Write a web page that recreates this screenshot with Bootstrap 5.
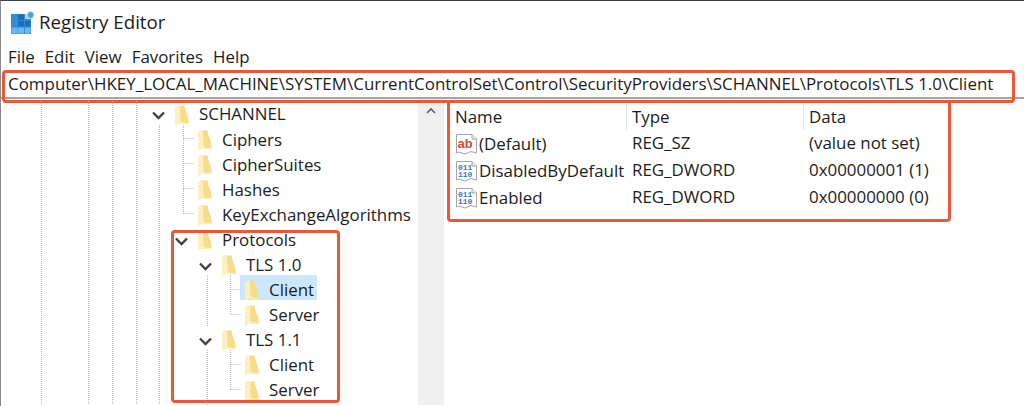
<!DOCTYPE html>
<html lang="en">
<head>
    <meta charset="UTF-8">
    <meta name="viewport" content="width=device-width, initial-scale=1.0">
    <title>Registry Editor</title>
    <link rel="stylesheet" href="https://cdn.jsdelivr.net/npm/bootstrap@5.3.0/dist/css/bootstrap.min.css">
    <style>
        html, body { height: 406px; overflow: hidden; }
        body { font-family: "Open Sans", "Noto Sans", sans-serif; font-size: 16.9px; color: #1c1c1c; background: #fff; line-height: 1.2; }
        .reg-window { width: 1024px; height: 406px; border-top: 1px solid #3d4248; border-left: 1px solid #8a8a8a; }
        .reg-title { height: 43px; padding-left: 10px; gap: 4px; font-size: 18.7px; }
        .reg-menu { height: 26px; padding-left: 7px; gap: 10px; }
        .reg-addr { height: 29px; padding-left: 7px; padding-top: 2px; border-bottom: 2px solid #a5a5a5; white-space: nowrap; font-size: 16.95px; }
        .mark-box { position: absolute; border: 3px solid #e8593a; border-radius: 4px; pointer-events: none; }
        .mark-addr { left: 1px; top: 69px; width: 1013px; height: 33px; }
        .mark-tree { left: 170px; top: 229px; width: 169px; height: 173px; }
        .reg-panes { height: 306px; overflow: hidden; }
        .tree-pane { width: 417px; padding-top: 3px; }
        .tree-row { height: 25.1px; white-space: nowrap; }
        .lv-0 { padding-left: 150px; }
        .lv-1 { padding-left: 173px; }
        .lv-2 { padding-left: 197px; }
        .lv-3 { padding-left: 220px; }
        .twist { width: 24px; flex: none; padding-left: 1px; }
        .tree-folder { flex: none; width: 14px; height: 21px; margin-right: 10px; margin-top: 1px; }
        .tree-selected { position: absolute; left: 239px; top: 176px; width: 77px; height: 25px; background: #cce8ff; }
        .tree-guides { position: absolute; left: 0; top: 2px; }
        .tree-row > * { position: relative; }
        .tree-scroll { width: 26px; background: #f0f0f0; padding-top: 9px; }
        .list-pane { width: 504px; height: 122px; margin-left: 3px; margin-top: 1px; border: 3px solid #e8593a; border-radius: 4px; }
        .list-grid { display: grid; grid-template-columns: 177px 177px 1fr; }
        .list-head { height: 27px; padding-top: 1px; }
        .list-head span { padding-left: 5px; border-right: 1px solid #e5e5e5; height: 26px; line-height: 25px; }
        .list-head span:last-child { border-right: 0; }
        .list-row { height: 27px; line-height: 26px; }
        .val-name { display: flex; align-items: center; white-space: nowrap; padding-left: 5px; }
        .val-icon { width: 24px; height: 24px; flex: none; }
        .list-row > span + span { padding-left: 5px; }
    </style>
</head>
<body>
    <svg width="0" height="0" class="position-absolute">
        <defs>
            <symbol id="folder" viewBox="0 0 14 21">
                <path d="M2 0.5 L9.5 0.5 L10.5 5 L13 12 L14 18.5 L2 18.5 Z" fill="#f7dc8a"/>
                <path d="M0 1.5 L5 0.5 L5.5 16 L8 17.8 L14 17.8 L14 18.8 L3.5 18.8 L1 20.5 L0 20.5 Z" fill="#fdf0c0"/>
            </symbol>
            <symbol id="pageIcon" viewBox="0 0 24 24">
                <path d="M1.5 2.5 H17 L21.5 7 V21 L16 19.5 L10 22 L4 20 L1.5 21 Z" fill="#fff" stroke="#a4a4a4"/>
                <path d="M17 2.5 V7 H21.5" fill="#eee" stroke="#a4a4a4"/>
            </symbol>
        </defs>
    </svg>

    <div class="reg-window position-relative">
        <div class="reg-title d-flex align-items-center">
            <svg width="24" height="23" viewBox="0 0 24 23">
                <rect x="0" y="3" width="20" height="20" fill="#2f8fdc"/>
                <g fill="#1c6db4">
                    <rect x="7" y="3.5" width="6" height="5.5"/>
                    <rect x="7" y="10" width="6" height="5.5"/>
                    <rect x="14" y="10" width="5.5" height="5.5"/>
                </g>
                <g fill="#6cb8ee">
                    <rect x="0.5" y="16.5" width="6" height="6"/>
                    <rect x="7" y="16.5" width="6" height="6"/>
                    <rect x="14" y="16.5" width="5.5" height="6"/>
                </g>
                <path d="M14 3 H19 V8 H14 Z" fill="#a9d3f2"/>
                <circle cx="19.5" cy="4" r="3.5" fill="#4a9fe0" stroke="#d4e8f8"/>
            </svg>
            <span>Registry Editor</span>
        </div>

        <div class="reg-menu d-flex align-items-center">
            <span>File</span><span>Edit</span><span>View</span><span>Favorites</span><span>Help</span>
        </div>

        <div class="reg-addr d-flex align-items-center">Computer\HKEY_LOCAL_MACHINE\SYSTEM\CurrentControlSet\Control\SecurityProviders\SCHANNEL\Protocols\TLS 1.0\Client</div>
        <div class="mark-box mark-addr"></div>

        <div class="reg-panes d-flex">
            <div class="tree-pane position-relative" id="tree">
                <div class="tree-selected"></div>
                <svg class="tree-guides" width="417" height="304" fill="none" stroke="#b4b4b4" stroke-dasharray="1 1">
                    <path d="M40.5 0V304 M87.5 0V304 M111.5 0V304 M135.5 0V304 M158.5 24V304"/>
                    <path d="M182.5 24V113 M182.5 37.5H193 M182.5 62.5H193 M182.5 87.5H193 M182.5 112.5H193"/>
                    <path d="M206.5 174V225 M206.5 249V304"/>
                    <path d="M229.5 174V213 M229.5 188.5H240 M229.5 213.5H240 M229.5 249V288 M229.5 263.5H240 M229.5 288.5H240"/>
                </svg>
            </div>
            <div class="tree-scroll d-flex justify-content-center align-items-start">
                <svg width="10" height="6" viewBox="0 0 10 6"><path d="M1 5 L5 1 L9 5" fill="none" stroke="#5a5a5a" stroke-width="1.6"/></svg>
            </div>
            <div class="list-pane">
                <div class="list-grid list-head"><span>Name</span><span>Type</span><span>Data</span></div>
                <div class="list-grid list-row">
                    <span class="val-name">
                        <svg class="val-icon" viewBox="0 0 24 24"><use href="#pageIcon"/><text x="2.5" y="16" font-family="Liberation Sans, sans-serif" font-weight="700" font-size="13" fill="#d9482b">ab</text></svg>(Default)
                    </span><span>REG_SZ</span><span>(value not set)</span>
                </div>
                <div class="list-grid list-row">
                    <span class="val-name">
                        <svg class="val-icon" viewBox="0 0 24 24"><use href="#pageIcon"/><text x="3" y="10.5" font-family="Liberation Mono, monospace" font-weight="700" font-size="8" fill="#3a6fd0">011</text><text x="3" y="18" font-family="Liberation Mono, monospace" font-weight="700" font-size="8" fill="#3a6fd0">110</text></svg>DisabledByDefault
                    </span><span>REG_DWORD</span><span>0x00000001 (1)</span>
                </div>
                <div class="list-grid list-row">
                    <span class="val-name">
                        <svg class="val-icon" viewBox="0 0 24 24"><use href="#pageIcon"/><text x="3" y="10.5" font-family="Liberation Mono, monospace" font-weight="700" font-size="8" fill="#3a6fd0">011</text><text x="3" y="18" font-family="Liberation Mono, monospace" font-weight="700" font-size="8" fill="#3a6fd0">110</text></svg>Enabled
                    </span><span>REG_DWORD</span><span>0x00000000 (0)</span>
                </div>
            </div>
        </div>
        <div class="mark-box mark-tree"></div>
    </div>

    <script>
        // name, depth, expanded
        const treeRows = [
            ["SCHANNEL", 0, true],
            ["Ciphers", 1, false],
            ["CipherSuites", 1, false],
            ["Hashes", 1, false],
            ["KeyExchangeAlgorithms", 1, false],
            ["Protocols", 1, true],
            ["TLS 1.0", 2, true],
            ["Client", 3, false],
            ["Server", 3, false],
            ["TLS 1.1", 2, true],
            ["Client", 3, false],
            ["Server", 3, false],
            ["", 1, false]
        ];

        const chevron = `<svg width="13" height="9" viewBox="0 0 13 9"><path d="M1 1.5 L6.5 7 L12 1.5" fill="none" stroke="#404040" stroke-width="2.3"/></svg>`;

        document.getElementById("tree").insertAdjacentHTML("beforeend", treeRows.map(([name, depth, open]) => `
            <div class="tree-row d-flex align-items-center lv-${depth}">
                <span class="twist">${open ? chevron : ""}</span>
                <svg class="tree-folder"><use href="#folder"/></svg>
                <span>${name}</span>
            </div>`).join(""));
    </script>
</body>
</html>
